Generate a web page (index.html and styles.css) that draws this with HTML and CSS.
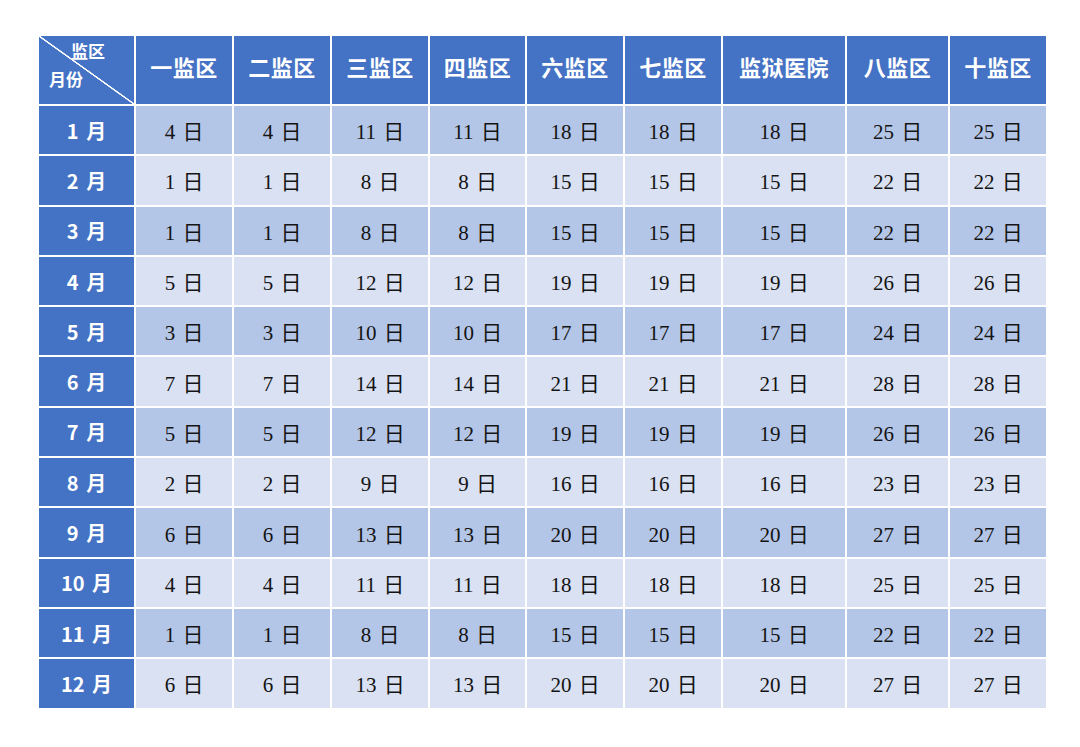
FILE: index.html
```html
<!DOCTYPE html>
<html lang="zh-CN">
<head>
<meta charset="utf-8">
<title>监区日期表</title>
<link rel="stylesheet" href="styles.css">
</head>
<body>
<table class="sched">
  <colgroup>
    <col class="c-m"><col class="c1"><col class="c2"><col class="c3"><col class="c4"><col class="c5"><col class="c6"><col class="c7"><col class="c8"><col class="c9">
  </colgroup>
  <thead>
    <tr class="hrow">
      <th class="corner"><span class="ct">监区</span><span class="cb">月份</span></th>
      <th>一监区</th><th>二监区</th><th>三监区</th><th>四监区</th><th>六监区</th><th>七监区</th><th>监狱医院</th><th>八监区</th><th>十监区</th>
    </tr>
  </thead>
  <tbody>
    <tr class="odd"><th>1 月</th><td>4 日</td><td>4 日</td><td>11 日</td><td>11 日</td><td>18 日</td><td>18 日</td><td>18 日</td><td>25 日</td><td>25 日</td></tr>
    <tr class="even"><th>2 月</th><td>1 日</td><td>1 日</td><td>8 日</td><td>8 日</td><td>15 日</td><td>15 日</td><td>15 日</td><td>22 日</td><td>22 日</td></tr>
    <tr class="odd"><th>3 月</th><td>1 日</td><td>1 日</td><td>8 日</td><td>8 日</td><td>15 日</td><td>15 日</td><td>15 日</td><td>22 日</td><td>22 日</td></tr>
    <tr class="even"><th>4 月</th><td>5 日</td><td>5 日</td><td>12 日</td><td>12 日</td><td>19 日</td><td>19 日</td><td>19 日</td><td>26 日</td><td>26 日</td></tr>
    <tr class="odd"><th>5 月</th><td>3 日</td><td>3 日</td><td>10 日</td><td>10 日</td><td>17 日</td><td>17 日</td><td>17 日</td><td>24 日</td><td>24 日</td></tr>
    <tr class="even"><th>6 月</th><td>7 日</td><td>7 日</td><td>14 日</td><td>14 日</td><td>21 日</td><td>21 日</td><td>21 日</td><td>28 日</td><td>28 日</td></tr>
    <tr class="odd"><th>7 月</th><td>5 日</td><td>5 日</td><td>12 日</td><td>12 日</td><td>19 日</td><td>19 日</td><td>19 日</td><td>26 日</td><td>26 日</td></tr>
    <tr class="even"><th>8 月</th><td>2 日</td><td>2 日</td><td>9 日</td><td>9 日</td><td>16 日</td><td>16 日</td><td>16 日</td><td>23 日</td><td>23 日</td></tr>
    <tr class="odd"><th>9 月</th><td>6 日</td><td>6 日</td><td>13 日</td><td>13 日</td><td>20 日</td><td>20 日</td><td>20 日</td><td>27 日</td><td>27 日</td></tr>
    <tr class="even"><th>10 月</th><td>4 日</td><td>4 日</td><td>11 日</td><td>11 日</td><td>18 日</td><td>18 日</td><td>18 日</td><td>25 日</td><td>25 日</td></tr>
    <tr class="odd"><th>11 月</th><td>1 日</td><td>1 日</td><td>8 日</td><td>8 日</td><td>15 日</td><td>15 日</td><td>15 日</td><td>22 日</td><td>22 日</td></tr>
    <tr class="even"><th>12 月</th><td>6 日</td><td>6 日</td><td>13 日</td><td>13 日</td><td>20 日</td><td>20 日</td><td>20 日</td><td>27 日</td><td>27 日</td></tr>
  </tbody>
</table>
</body>
</html>
```

FILE: styles.css
```css
html, body {
  margin: 0;
  padding: 0;
  background: #ffffff;
}

body {
  padding: 34px 0 0 37px;
  font-family: "Liberation Serif", "Noto Sans CJK SC", serif;
}

.sched {
  border-collapse: collapse;
  table-layout: fixed;
  width: 1009px;
}

.sched th,
.sched td {
  border: 2px solid #ffffff;
  padding: 0;
  text-align: center;
  vertical-align: middle;
}

.c-m { width: 97px; }
.c1 { width: 98px; }
.c2 { width: 98px; }
.c3 { width: 98px; }
.c4 { width: 97px; }
.c5 { width: 98px; }
.c6 { width: 98px; }
.c7 { width: 124px; }
.c8 { width: 103px; }
.c9 { width: 98px; }

.hrow th {
  height: 60px;
  padding-bottom: 8px;
  background: #4472c4;
  color: #ffffff;
  font-family: "Noto Sans CJK SC", "Noto Sans", sans-serif;
  font-weight: 700;
  font-size: 22px;
  letter-spacing: 0.5px;
}

.sched tbody tr {
  height: 50.3px;
}

.sched tbody th {
  background: #4472c4;
  color: #ffffff;
  font-family: "Noto Sans CJK SC", "Noto Sans", sans-serif;
  font-weight: 700;
  font-size: 20px;
  word-spacing: 3px;
}

.sched tbody td {
  color: #141414;
  font-size: 21px;
  word-spacing: 2px;
  font-family: "Liberation Serif", "Noto Sans CJK SC", serif;
}

.odd td { background: #b4c6e7; }
.even td { background: #d9e1f2; }

.hrow th.corner {
  background:
    linear-gradient(to top right,
      transparent calc(50% - 1px),
      #ffffff calc(50% - 0.5px),
      #ffffff calc(50% + 0.5px),
      transparent calc(50% + 1px)),
    #4472c4;
  font-size: 17px;
  letter-spacing: 0;
  text-align: left;
}

.corner .ct,
.corner .cb {
  display: block;
  line-height: 20px;
}

.corner .ct {
  padding-left: 32px;
  margin-top: -2px;
}

.corner .cb {
  padding-left: 10px;
  margin-top: 8px;
}
```
